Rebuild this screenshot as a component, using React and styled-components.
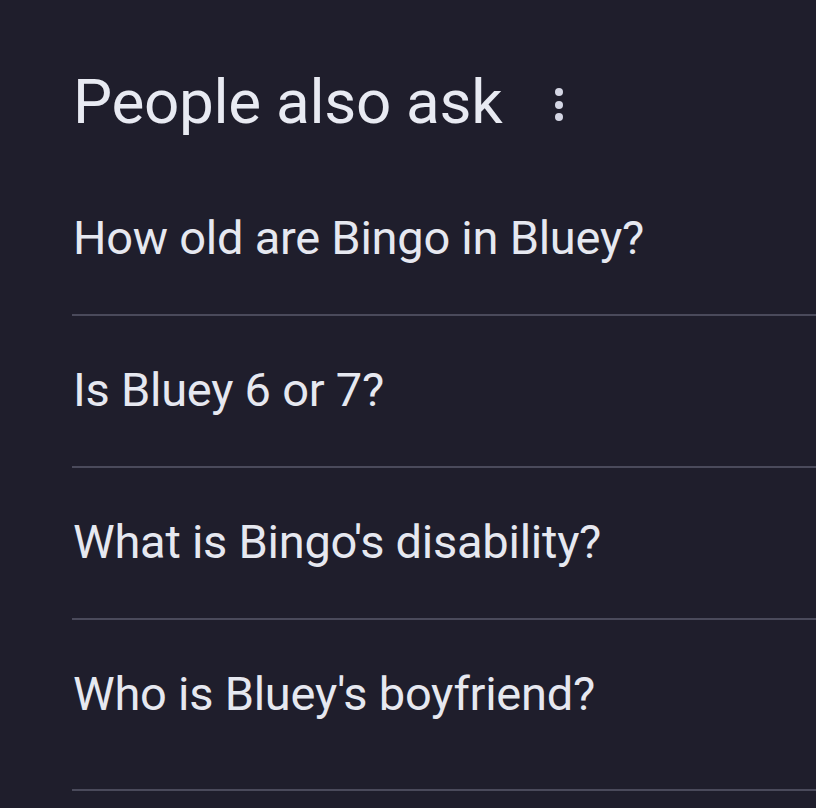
import React from "react";
import styled, { createGlobalStyle } from "styled-components";

const Global = createGlobalStyle`
  html, body {
    margin: 0;
    padding: 0;
    background: #1f1e2c;
  }
  body {
    font-family: Roboto, "Liberation Sans", Arial, sans-serif;
    -webkit-font-smoothing: antialiased;
  }
`;

const Page = styled.div`
  min-height: 808px;
  background: #1f1e2c;
  padding-left: 72px;
  box-sizing: border-box;
  overflow: hidden;
`;

const Header = styled.div`
  display: flex;
  align-items: center;
  gap: 45px;
  padding: 70px 0 30px 1px;
  height: 64px;
`;

const Title = styled.h2`
  margin: 0;
  font-size: 62px;
  line-height: 64px;
  font-weight: 400;
  color: #e8eaf2;
  letter-spacing: -0.3px;
`;

const MoreButton = styled.div`
  display: flex;
  align-items: center;
  justify-content: center;
  width: 24px;
  height: 40px;
  margin-top: 4px;
`;

const Row = styled.div`
  padding: 46px 0 ${(p) => p.$bottom}px 1px;
  border-bottom: 2px solid #4a4a5b;
`;

const Question = styled.div`
  font-size: 47px;
  line-height: 56px;
  color: #e6e8f0;
  letter-spacing: -0.25px;
  white-space: nowrap;
`;

const questions = [
  "How old are Bingo in Bluey?",
  "Is Bluey 6 or 7?",
  "What is Bingo's disability?",
  "Who is Bluey's boyfriend?",
];

export default function App() {
  return (
    <Page>
      <Global />
      <Header>
        <Title>People also ask</Title>
        <MoreButton aria-label="More options">
          <svg width="10" height="36" viewBox="0 0 10 36">
            <circle cx="5" cy="6" r="4" fill="#d4d6e4" />
            <circle cx="5" cy="19" r="4" fill="#d4d6e4" />
            <circle cx="5" cy="31" r="4" fill="#d4d6e4" />
          </svg>
        </MoreButton>
      </Header>
      {questions.map((q, i) => (
        <Row key={q} $bottom={i === questions.length - 1 ? 67 : 48}>
          <Question>{q}</Question>
        </Row>
      ))}
    </Page>
  );
}
